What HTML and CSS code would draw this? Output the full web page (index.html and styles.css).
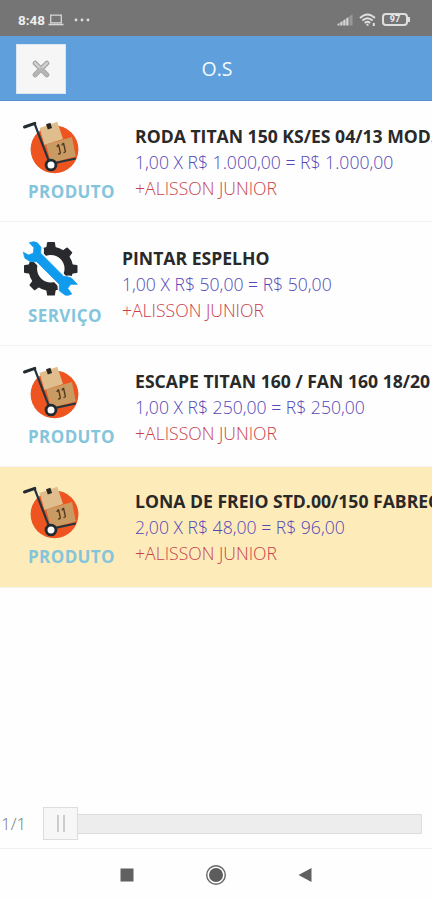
FILE: index.html
```html
<!DOCTYPE html>
<html lang="pt-BR">
<head>
  <meta charset="UTF-8" />
  <meta name="viewport" content="width=device-width, initial-scale=1.0" />
  <title>O.S</title>
  <link rel="stylesheet" href="styles.css">
</head>
<body>
  <svg class="sprite" width="0" height="0">
    <symbol id="produto" viewBox="0 0 60 60">
      <circle cx="32.5" cy="29.3" r="23.9" fill="#ee5420"/>
      <path d="M17.5 8 35.3 1.8 41 19 22.5 25Z" fill="#e0bd8c"/>
      <path d="M24 4.2l4.4-1.5 1.6 5.4-4.2 1.4z" fill="#2b2824"/>
      <path d="M24 24.5 50 17 53.8 36.5 29 43Z" fill="#c99b62"/>
      <path d="M36.5 24.5l2 9M41.5 23l2 9M34.7 26.8l1.8-2.3M39.7 25.3l1.8-2.3M36.2 34l2.3-.5M41.5 32.6l2-.6" fill="none" stroke="#4f3520" stroke-width="1.3"/>
      <path d="M12.5 3.5 28 44 53.8 38.5" fill="none" stroke="#233640" stroke-width="2.2"/>
      <path d="M2.5 7 12.8 3.4" stroke="#222b30" stroke-width="3" stroke-linecap="round"/>
      <circle cx="29" cy="45" r="4.9" fill="#fff" stroke="#202a2f" stroke-width="2.8"/>
    </symbol>
    <symbol id="servico" viewBox="0 0 60 60">
      <mask id="vao">
        <rect width="60" height="60" fill="#fff"/>
        <path d="M10 11 47 48" stroke="#000" stroke-width="13" stroke-linecap="round"/>
        <circle cx="11" cy="11" r="11" fill="#000"/>
        <circle cx="46.5" cy="46.5" r="11" fill="#000"/>
      </mask>
      <g mask="url(#vao)" fill="#292a2d" stroke="#292a2d" stroke-linejoin="round">
        <circle cx="28.8" cy="28.8" r="18" fill="none" stroke-width="8.5"/>
        <path d="M25 10l1-7h6l1 7zM25 47.5l1 7h6l1-7zM10 25l-7 1v6l7 1zM47.5 25l7 1v6l-7 1z" stroke-width="2"/>
        <path d="M39 13l6-4.5 4.2 4.2L44.5 19zM13 39l-4.5 6 4.2 4.2L19 44.5z" stroke-width="2"/>
      </g>
      <path d="M7.3 2.7Q12 1 15.3 2.7L19 7.3 18.7 13.3 41.8 36.4Q46 36.2 49.7 38.3L55.3 44.3 48.7 44.3 45.7 48.3 49.7 54Q46 56 43 55L37.3 50.7V44.3L14.7 21.7H8.7L3 18.3 1.3 12.3 6.3 15 11.3 13.3 12 7.7Z" fill="#109bed" stroke="#109bed" stroke-width=".8" stroke-linejoin="round"/>
    </symbol>
  </svg>

  <div class="status">
    <span class="hora">8:48</span>
    <svg class="laptop" viewBox="0 0 16 12" width="16" height="12">
      <path d="M2.7 1.2h10.6v7.6H2.7z" fill="none" stroke="#d8d8d8" stroke-width="1.3"/>
      <path d="M.5 10.5h15" stroke="#d8d8d8" stroke-width="1.6"/>
    </svg>
    <svg class="pontos" viewBox="0 0 16 4" width="16" height="4" fill="#dedede">
      <circle cx="2" cy="2" r="1.4"/><circle cx="8" cy="2" r="1.4"/><circle cx="14" cy="2" r="1.4"/>
    </svg>
    <svg class="sinal" viewBox="0 0 16 12" width="16" height="12">
      <path d="M.5 10v1.5h2V9zM3.2 8.4v3.1h2.3V7zM6.2 6.4v5.1h2.3V5zM9.2 4.4v7.1h2.3V3z" fill="#d5d5d5"/>
      <path d="M12.5 2v9.5h3V.5z" fill="#999"/>
    </svg>
    <svg class="wifi" viewBox="0 0 18 14" width="18" height="14" fill="none" stroke="#e0e0e0" stroke-width="1.8">
      <path d="M1 5q7.5-7 15 0M3.4 7.5q5.1-4.6 10.2 0M5.8 10q2.7-2.4 5.4 0"/>
      <path d="M8.5 10.8v2M14.8 10v3" stroke-width="2"/>
    </svg>
    <div class="bateria">97</div>
  </div>

  <header class="topo">
    <button class="fechar" aria-label="Fechar">
      <svg viewBox="0 0 18 18" width="18" height="18" stroke-linecap="round">
        <path d="M3.2 3.2 14.8 14.8M14.8 3.2 3.2 14.8" stroke="#a5a5a5" stroke-width="5"/>
        <path d="M3.2 3.2 14.8 14.8M14.8 3.2 3.2 14.8" stroke="#d0d0d0" stroke-width="2.6"/>
        <path d="M9 9 14.8 14.8M9 9 3.2 14.8" stroke="#b5b5b5" stroke-width="3"/>
      </svg>
    </button>
    <h1>O.S</h1>
  </header>

  <main class="lista">
    <div class="item">
      <div class="tipo"><svg width="60" height="60"><use href="#produto"/></svg><span>PRODUTO</span></div>
      <div class="dados">
        <h2>RODA TITAN 150 KS/ES 04/13 MOD.</h2>
        <p class="valor">1,00 X R$ 1.000,00 = R$ 1.000,00</p>
        <p class="nome">+ALISSON JUNIOR</p>
      </div>
    </div>
    <div class="item servico">
      <div class="tipo"><svg width="60" height="60"><use href="#servico"/></svg><span>SERVIÇO</span></div>
      <div class="dados">
        <h2>PINTAR ESPELHO</h2>
        <p class="valor">1,00 X R$ 50,00 = R$ 50,00</p>
        <p class="nome">+ALISSON JUNIOR</p>
      </div>
    </div>
    <div class="item">
      <div class="tipo"><svg width="60" height="60"><use href="#produto"/></svg><span>PRODUTO</span></div>
      <div class="dados">
        <h2>ESCAPE TITAN 160 / FAN 160 18/20</h2>
        <p class="valor">1,00 X R$ 250,00 = R$ 250,00</p>
        <p class="nome">+ALISSON JUNIOR</p>
      </div>
    </div>
    <div class="item ativo">
      <div class="tipo"><svg width="60" height="60"><use href="#produto"/></svg><span>PRODUTO</span></div>
      <div class="dados">
        <h2>LONA DE FREIO STD.00/150 FABREC</h2>
        <p class="valor">2,00 X R$ 48,00 = R$ 96,00</p>
        <p class="nome">+ALISSON JUNIOR</p>
      </div>
    </div>
  </main>

  <div class="paginacao">
    <span class="pagina">1/1</span>
    <div class="alca"><i></i><i></i></div>
    <div class="trilho"></div>
  </div>

  <nav class="navegacao">
    <svg viewBox="0 0 14 14" width="14" height="14"><path d="M.5.5h13v13H.5z" fill="#606060"/></svg>
    <svg viewBox="0 0 22 22" width="22" height="22">
      <circle cx="11" cy="11" r="9.3" fill="none" stroke="#686868" stroke-width="1.4"/>
      <circle cx="11" cy="11" r="7" fill="#5c5c5c"/>
    </svg>
    <svg viewBox="0 0 14 16" width="14" height="16"><path d="M.5 8 13.5 1v14z" fill="#606060"/></svg>
  </nav>
</body>
</html>
```
FILE: styles.css
```css
* {
  box-sizing: border-box;
}

body {
  margin: 0;
  height: 900px;
  display: flex;
  flex-direction: column;
  background: #fefefe;
  font-family: 'Open Sans', sans-serif;
  overflow: hidden;
}

h1, h2, p {
  margin: 0;
}

.sprite {
  display: block;
  flex: none;
}

.status {
  height: 36px;
  flex: none;
  display: flex;
  align-items: center;
  padding: 3px 22px 0 18px;
  background: #757575;
  color: #eee;
}

.hora {
  width: 28px;
  font: bold 13.5px Roboto, sans-serif;
}

.laptop {
  margin-left: 2px;
}

.pontos {
  margin-left: 10px;
}

.sinal {
  margin-left: auto;
}

.wifi {
  margin-left: 6px;
}

.bateria {
  width: 26px;
  height: 13px;
  margin: 0 2px 0 5px;
  border: 2px solid #dedede;
  border-radius: 4px;
  font: bold 9px/9px Roboto, sans-serif;
  text-align: center;
  position: relative;
}

.bateria::after {
  content: "";
  position: absolute;
  right: -4px;
  top: 2px;
  width: 2px;
  height: 5px;
  background: #dedede;
}

.topo {
  height: 65px;
  flex: none;
  display: grid;
  grid-template-columns: 50px 1fr 50px;
  align-items: center;
  padding: 1px 16px 0;
  background: #5f9fdc;
  border-bottom: 1px solid #5691ca;
}

.fechar {
  width: 50px;
  height: 50px;
  display: flex;
  align-items: center;
  justify-content: center;
  padding: 0;
  border: 1px solid #dce6ef;
  background: #f6f6f6;
}

.topo h1 {
  color: #f2faff;
  font-size: 19.5px;
  font-weight: 400;
  text-align: center;
  padding-left: 2px;
}

.lista {
  flex: 1;
}

.item {
  height: 121px;
  display: flex;
  align-items: flex-start;
  gap: 20px;
  padding: 19px 0 0 22px;
  border-bottom: 1px solid #f3f3f3;
  overflow: hidden;
}

.item.servico {
  height: 124px;
  padding-top: 18px;
}

.item.servico .tipo span {
  padding-top: 4px;
}

.item.servico .dados {
  padding-top: 5px;
}

.item.ativo {
  padding-top: 18px;
  background: #fdecb9;
}

.tipo {
  flex: none;
  display: flex;
  flex-direction: column;
}

.tipo svg {
  display: block;
}

.tipo span {
  padding-left: 6px;
  color: #84c5dc;
  font-size: 17px;
  font-weight: 700;
  line-height: 24px;
  letter-spacing: 0.4px;
}

.dados {
  padding-top: 3px;
  line-height: 26px;
  white-space: nowrap;
}

.dados h2 {
  color: #292929;
  font-size: 17.6px;
  line-height: 26px;
  font-weight: 700;
}

.valor,
.nome {
  font-size: 17.6px;
  font-weight: 300;
}

.valor {
  color: #5348b8;
}

.nome {
  color: #c83f4c;
}

.paginacao {
  height: 50px;
  flex: none;
  display: flex;
  align-items: center;
  padding: 0 10px 0 1px;
  border-bottom: 1px solid #f1f1f1;
}

.pagina {
  width: 42px;
  color: #777;
  font-size: 17px;
  font-weight: 300;
}

.alca {
  width: 35px;
  height: 33px;
  display: flex;
  align-items: center;
  justify-content: center;
  gap: 4px;
  border: 1px solid #ddd;
  background: #f7f7f7;
}

.alca i {
  width: 2px;
  height: 17px;
  background: #ccc;
}

.trilho {
  flex: 1;
  height: 20px;
  border: 1px solid #ddd;
  border-left: 0;
  background: #ededed;
}

.navegacao {
  height: 51px;
  flex: none;
  display: flex;
  align-items: center;
  padding-left: 120px;
  gap: 71px;
}
```
